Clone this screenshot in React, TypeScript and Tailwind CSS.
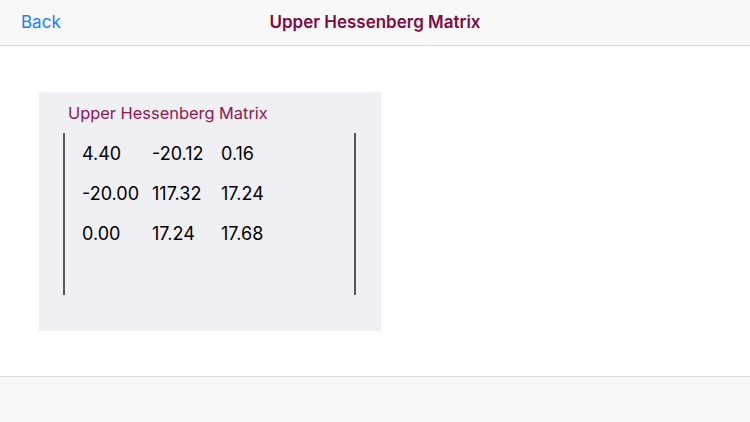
import React from 'react';

const rows = [
  ['4.40', '-20.12', '0.16'],
  ['-20.00', '117.32', '17.24'],
  ['0.00', '17.24', '17.68'],
];

export default function App() {
  return (
    <div className="w-[750px] h-[422px] flex flex-col bg-white font-['Inter','Roboto',sans-serif] overflow-hidden">
      <header className="h-[46px] shrink-0 flex items-center relative bg-[#f8f8f8] border-b border-[#dcdcdc]">
        <button className="pl-[21px] text-[17px] text-[#1b7ff6]">Back</button>
        <h1 className="absolute left-0 right-0 text-center text-[17px] font-semibold text-[#7c0c42] pointer-events-none">
          Upper Hessenberg Matrix
        </h1>
      </header>

      <main className="flex-1 pt-[46px] pl-[39px]">
        <div className="w-[342px] h-[239px] bg-[#efeff4] pt-[10px]">
          <div className="pl-[29px] text-[16.4px] leading-[22px] text-[#8b1a50]">Upper Hessenberg Matrix</div>
          <div className="mt-[9px] ml-[24px] w-[293px] h-[162px] border-l-2 border-r-2 border-[#555] pl-[17px]">
            {rows.map((r, i) => (
              <div key={i} className="flex h-[40px] items-center text-[18px] text-black">
                <span className="w-[70px]">{r[0]}</span>
                <span className="w-[69px]">{r[1]}</span>
                <span>{r[2]}</span>
              </div>
            ))}
          </div>
        </div>
      </main>

      <footer className="h-[46px] shrink-0 bg-[#f8f8f8] border-t border-[#dcdcdc]" />
    </div>
  );
}
